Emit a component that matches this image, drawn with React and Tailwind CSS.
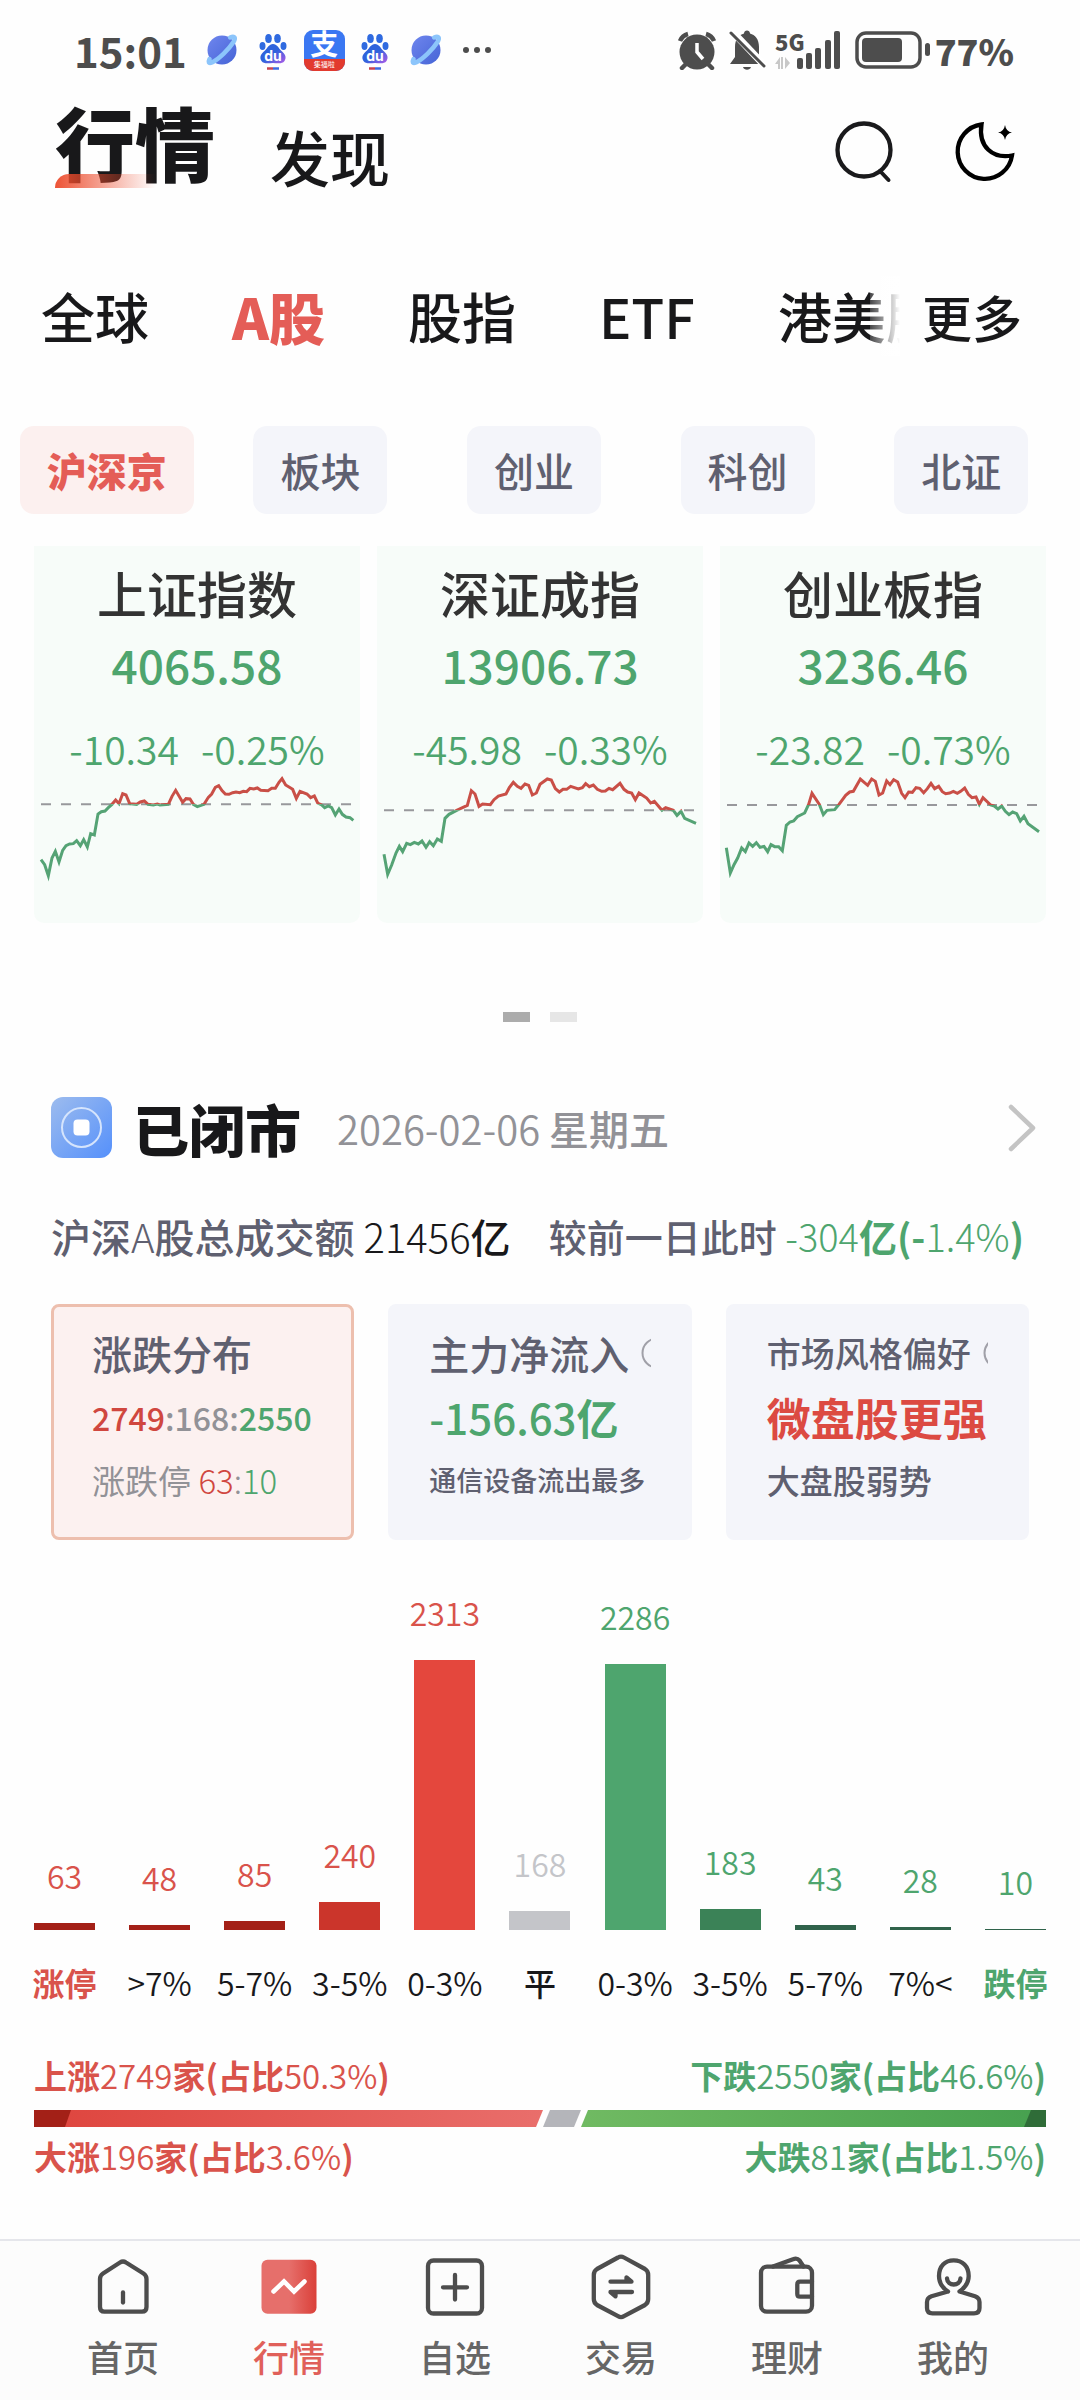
import { useState } from "react";

const indexes = [
  {
    name: "上证指数", value: "4065.58", change: "-10.34", percent: "-0.25%", left: 42, base: 824,
    points: "63,990 74,1005 85,1038 96,985 106,965 117,997 128,962 138,948 149,943 160,942 170,933 181,948 191,930 202,952 212,912 223,916 234,853 244,846 255,844 265,834 276,824 287,811 297,822 308,792 318,796 329,822 350,824 361,817 373,814 384,824 400,826 412,823 420,826 445,824 456,800 467,782 488,818 498,807 510,808 520,824 532,831 552,824 565,803 575,793 586,773 596,768 606,783 616,793 627,794 638,789 648,787 659,789 670,785 680,786 690,776 701,778 712,775 722,782 744,783 755,776 766,776 777,758 786,747 797,766 818,779 829,806 840,785 861,793 872,804 883,799 893,820 905,826 914,834 925,829 935,834 946,856 957,838 967,854 978,862 990,864 1000,872",
  },
  {
    name: "深证成指", value: "13906.73", change: "-45.98", percent: "-0.33%", left: 21, base: 842,
    points: "42,974 53,1034 65,1006 78,970 88,950 98,966 110,941 121,945 133,938 145,943 156,934 168,953 179,936 190,948 202,928 214,935 225,866 237,854 260,842 292,827 304,783 315,793 327,830 338,823 361,825 372,810 385,799 408,793 418,774 430,758 442,770 453,776 465,763 476,767 487,796 499,790 510,764 532,748 544,751 556,777 568,787 579,779 590,779 602,770 625,778 637,774 647,762 658,771 670,766 682,779 695,785 706,784 717,776 728,780 750,761 762,779 773,787 785,790 796,810 807,790 830,805 842,820 853,815 876,842 887,834 910,842 921,857 933,845 944,866 978,881",
  },
  {
    name: "创业板指", value: "3236.46", change: "-23.82", percent: "-0.73%", left: 31, base: 826,
    points: "50,954 62,1030 73,1005 84,985 96,955 107,966 118,940 129,950 140,939 151,953 163,950 174,966 184,945 195,951 207,951 218,963 230,887 241,877 252,874 263,861 285,850 297,824 307,791 329,824 341,855 352,842 375,840 388,824 408,797 420,787 431,785 452,748 474,767 486,748 497,755 508,796 519,790 531,754 541,765 552,750 564,757 576,791 586,804 597,787 608,788 619,774 630,776 642,789 653,777 664,761 675,777 687,770 698,786 708,792 720,790 731,785 743,791 753,785 765,775 776,794 787,804 799,802 809,824 820,804 843,826 854,829 865,838 876,829 887,845 898,855 909,847 921,852 932,874 943,860 955,882 988,906",
  },
];

const bars = [
  { label: "涨停", count: 63, bar: "bg-[#a32017]", text: "text-[#d9534b]", labelColor: "text-[#d9534b] font-bold" },
  { label: ">7%", count: 48, bar: "bg-[#a32017]", text: "text-[#d9534b]" },
  { label: "5-7%", count: 85, bar: "bg-[#a32017]", text: "text-[#d9534b]" },
  { label: "3-5%", count: 240, bar: "bg-[#cb352b]", text: "text-[#d9534b]" },
  { label: "0-3%", count: 2313, bar: "bg-[#e4473d]", text: "text-[#d9534b]" },
  { label: "平", count: 168, bar: "bg-[#c4c5c9]", text: "text-[#c4c5c9]", labelColor: "text-[#18181a] font-medium" },
  { label: "0-3%", count: 2286, bar: "bg-[#4ea56e]", text: "text-[#4ea56e]" },
  { label: "3-5%", count: 183, bar: "bg-[#3b8257]", text: "text-[#4ea56e]" },
  { label: "5-7%", count: 43, bar: "bg-[#30634b]", text: "text-[#4ea56e]" },
  { label: "7%<", count: 28, bar: "bg-[#30634b]", text: "text-[#4ea56e]" },
  { label: "跌停", count: 10, bar: "bg-[#30634b]", text: "text-[#4ea56e]", labelColor: "text-[#4ea56e] font-bold" },
];

const chips = ["沪深京", "板块", "创业", "科创", "北证"];

function Planet() {
  return (
    <svg viewBox="0 0 34 34" className="size-[34px]">
      <defs>
        <linearGradient id="planet" x1="0" y1="0" x2="1" y2="1">
          <stop offset="0" stopColor="#6f86ee" />
          <stop offset="1" stopColor="#4564d6" />
        </linearGradient>
      </defs>
      <circle cx="17" cy="17" r="14.500" fill="url(#planet)" />
      <path d="M25 4.500 C30 2.500 31 5 28.500 9 C24 16 14 26 7 29.500 C3.500 31 3 29 4.500 26" fill="none" stroke="#8cc5fb" strokeWidth="4.500" strokeLinecap="round" />
    </svg>
  );
}

function Paw() {
  return (
    <svg viewBox="0 0 34 42" className="h-[42px] w-[34px]">
      <defs>
        <linearGradient id="paw" x1="0" y1="0" x2="1" y2="1">
          <stop offset="0.5" stopColor="#2f63dc" />
          <stop offset="1" stopColor="#b05be8" />
        </linearGradient>
      </defs>
      <ellipse cx="12.500" cy="9.500" rx="3.300" ry="4.500" fill="#2f6ae0" />
      <ellipse cx="21.500" cy="9.500" rx="3.300" ry="4.500" fill="#2f6ae0" />
      <ellipse cx="6.500" cy="17" rx="3" ry="4" fill="#2f6ae0" />
      <ellipse cx="27.500" cy="17" rx="3" ry="4" fill="#2f6ae0" />
      <path d="M17 15 C21 15 22.500 19 25 21.500 C29 25 31 28 28.500 32 C26 35.500 21 34 17 34 C13 34 8 35.500 5.500 32 C3 28 5 25 9 21.500 C11.500 19 13 15 17 15Z" fill="url(#paw)" />
      <text x="17" y="31.500" textAnchor="middle" fontSize="14" fontWeight="700" fontFamily="Inter, sans-serif" fill="#fff">du</text>
      <path d="M11 39.500H17" stroke="#c9434f" strokeWidth="2.500" />
      <path d="M17 39.500H23" stroke="#3c6be0" strokeWidth="2.500" />
    </svg>
  );
}

function Alipay() {
  return (
    <span className="flex h-[41px] w-[41px] flex-col items-center overflow-hidden rounded-[9px] bg-[#3a77f2] text-white">
      <span className="h-[29px] text-[28px] leading-[26px] font-bold">支</span>
      <span className="h-[12px] w-full bg-[#e23a2e] text-center text-[7px] leading-[11px]">集福啦</span>
    </span>
  );
}

function StatusBar() {
  return (
    <div className="flex h-[100px] items-center justify-between pr-[66px] pl-[74px] text-[#4d4d4d]">
      <div className="flex items-center">
        <span className="text-[42px] leading-10 font-bold">15:01</span>
        <div className="ml-2.5 flex items-center [&>*]:shrink-0">
          <span className="flex w-[51px] justify-center"><Planet /></span>
          <span className="flex w-[51px] justify-center"><Paw /></span>
          <span className="flex w-[51px] justify-center"><Alipay /></span>
          <span className="flex w-[51px] justify-center"><Paw /></span>
          <span className="flex w-[51px] justify-center"><Planet /></span>
          <span className="flex w-[51px] justify-center gap-[5px]">
            <i className="size-1.5 rounded-full bg-[#4d4d4d]" />
            <i className="size-1.5 rounded-full bg-[#4d4d4d]" />
            <i className="size-1.5 rounded-full bg-[#4d4d4d]" />
          </span>
        </div>
      </div>
      <div className="flex items-center">
        <svg viewBox="0 0 40 40" className="size-10" fill="none" stroke="#4d4d4d">
          <circle cx="20" cy="22" r="17.500" fill="#4d4d4d" stroke="none" />
          <path d="M3 11 A12 12 0 0 1 11 4 M29 4 A12 12 0 0 1 37 11" strokeWidth="4.500" />
          <path d="M9 34 L5 38 M31 34 L35 38" strokeWidth="4.500" strokeLinecap="round" />
          <path d="M20 13V22L26 29" stroke="#fff" strokeWidth="3.500" />
        </svg>
        <svg viewBox="0 0 40 42" className="ml-2.5 h-[42px] w-10">
          <path d="M3 35 L8 28 V18 C8 10 12 6 17 4.500 C17 0.500 23 0.500 23 4.500 C28 6 32 10 32 18 V28 L37 35Z" fill="#4d4d4d" />
          <path d="M16 38 H24 C23 41.500 17 41.500 16 38Z" fill="#4d4d4d" />
          <path d="M3 0 L38 37" stroke="#fff" strokeWidth="7" />
          <path d="M4 4 L37 37" stroke="#4d4d4d" strokeWidth="3" strokeLinecap="round" />
        </svg>
        <div className="ml-2 flex h-[38px] items-end">
          <div className="flex flex-col justify-between self-stretch">
            <span className="text-[22px] leading-5 font-black">5G</span>
            <svg viewBox="0 0 16 12" className="h-3 w-4" fill="#c8c8c8">
              <path d="M0 7 L5 0 V12 H3 V7Z M6 0H8V12H6Z M10 0 L15 6 L10 12Z" />
            </svg>
          </div>
          <svg viewBox="0 0 44 38" className="-ml-2 h-[38px] w-11" fill="#4d4d4d">
            <rect x="0" y="27" width="6" height="11" rx="2" />
            <rect x="9" y="22" width="6" height="16" rx="2" />
            <rect x="18" y="17" width="6" height="21" rx="2" />
            <rect x="28" y="9" width="6" height="29" rx="2" />
            <rect x="37" y="0" width="6" height="38" rx="2" />
          </svg>
        </div>
        <svg viewBox="0 0 76 38" className="ml-3.5 h-[38px] w-[76px]">
          <rect x="2" y="2" width="63" height="34" rx="9" fill="none" stroke="#4d4d4d" strokeWidth="3.500" />
          <rect x="7" y="7" width="40" height="24" rx="4" fill="#4d4d4d" />
          <rect x="70" y="12" width="5" height="13" rx="2.500" fill="#4d4d4d" />
        </svg>
        <span className="ml-1 text-[36px] leading-10 font-black">77%</span>
      </div>
    </div>
  );
}

function Sparkline({ left, base, points }) {
  const id = "spark" + base;
  return (
    <svg viewBox={`${left} 730 978 330`} className="mt-1.5 w-full" fill="none">
      <clipPath id={id + "up"}><rect x="0" y="700" width="1100" height={base - 700} /></clipPath>
      <clipPath id={id + "down"}><rect x="0" y={base} width="1100" height="400" /></clipPath>
      <path d={`M${left + 21} ${base}H${left + 957}`} stroke="#98989c" strokeWidth="6" strokeDasharray="30 30" />
      <polyline points={points} stroke="#c94f47" strokeWidth="9" clipPath={`url(#${id}up)`} />
      <polyline points={points} stroke="#55a375" strokeWidth="9" clipPath={`url(#${id}down)`} />
    </svg>
  );
}

function HelpRing() {
  return (
    <svg viewBox="0 0 32 32" className="size-8 shrink-0" fill="none" stroke="#a0a0a8" strokeWidth="2">
      <circle cx="16" cy="16" r="14.500" />
    </svg>
  );
}

function NavIcon({ name }) {
  return (
    <svg viewBox="0 0 68 68" className="size-[68px]" fill="none" stroke="#4d4d4d" strokeWidth="4.300" strokeLinejoin="round" strokeLinecap="round">
      {name === "首页" && (
        <>
          <path d="M31 9.500 Q34 7.500 37 9.500 L54.500 20.500 Q57.500 22.500 57.500 26 V54 Q57.500 58.700 53 58.700 H15.500 Q11 58.700 11 54 V26 Q11 22.500 14 20.500Z" />
          <path d="M34 39.500V49.500" />
        </>
      )}
      {name === "行情" && (
        <>
          <defs>
            <linearGradient id="navRed">
              <stop offset="0.5" stopColor="#e66f6b" />
              <stop offset="1" stopColor="#da4039" />
            </linearGradient>
          </defs>
          <rect x="6.500" y="6.700" width="55" height="54" rx="6" fill="url(#navRed)" stroke="none" />
          <path d="M18.500 38.500 L29 28.500 L39 38.500 L49.500 28.500" stroke="#fff" strokeWidth="4.500" strokeLinejoin="miter" />
        </>
      )}
      {name === "自选" && (
        <>
          <rect x="7" y="7.500" width="54" height="53" rx="5.500" />
          <path d="M34 22V46.500 M22 34.300H46" />
        </>
      )}
      {name === "交易" && (
        <>
          <path d="M31 4.500 Q34 2.800 37 4.500 L58 16 Q61.200 18 61.200 22 V46 Q61.200 50 58 52 L37 63.200 Q34 65 31 63.200 L10 52 Q6.800 50 6.800 46 V22 Q6.800 18 10 16Z" />
          <path d="M23.500 28.700H44.500L39.500 24.500V28 M45 39H23.500L28.500 43.300V40" />
        </>
      )}
      {name === "理财" && (
        <>
          <rect x="8" y="13.700" width="51" height="45" rx="6" />
          <path d="M59 28.700H47Q44.300 28.700 44.300 31.500V41Q44.300 43.700 47 43.700H59" />
          <path d="M20 13.500 L40 6.200 Q44 4.500 46.500 7.500 L50.500 13.500" />
        </>
      )}
      {name === "我的" && (
        <>
          <path d="M29 38.500 C22 34 20 29 20 23 C20 13 26 7.300 34.700 7.300 S49.700 13 49.700 23 C49.700 29 47 34 40.500 38.500 L56 43.300 Q60.500 45 60.500 49 V55 Q60.500 60.300 55 60.300 H13.500 Q8 60.300 8 55 V49 Q8 45 12.500 43.300 L29 38.500" />
          <path d="M28 25.500 C28.500 33.500 41 33.500 41.500 25.500" />
        </>
      )}
    </svg>
  );
}

export default function App() {
  const [chip, setChip] = useState("沪深京");
  const max = Math.max(...bars.map((b) => b.count));

  return (
    <div className="flex min-h-screen flex-col bg-[#fefefe] font-['Noto_Sans_CJK_SC',sans-serif] text-[#18181a]">
      <StatusBar />

      <header className="flex h-[86px] items-end justify-between pr-[62px] pl-[55px]">
        <div className="flex items-end gap-[55px]">
          <h1 className="relative mb-1.5 text-[80px] leading-[80px] font-black">
            行情
            <span className="absolute -bottom-2 left-0 h-3.5 w-[101px] rounded-tl-[14px] bg-linear-to-r from-[#ec4a2b] to-[#ec4a2b]/0 opacity-95" />
          </h1>
          <a href="#discover" className="text-[60px] leading-[60px] font-medium">发现</a>
        </div>
        <div className="mb-0.5 flex gap-14">
          <button aria-label="搜索">
            <svg viewBox="0 0 64 64" className="size-16" fill="none" stroke="#1a1a1c" strokeWidth="4.300" strokeLinecap="round">
              <circle cx="30" cy="30" r="26.500" />
              <path d="M46 51 L54.500 60" strokeWidth="4" />
            </svg>
          </button>
          <button aria-label="夜间模式">
            <svg viewBox="0 0 64 64" className="size-16" fill="none" stroke="#000" strokeWidth="4.300">
              <path d="M27.500 4.500 A27.300 27.300 0 1 0 58 35.500 C39 39 24 27 27.500 4.500Z" />
              <path d="M51 5 Q52 11.500 58 12.500 Q52 13.500 51 20 Q50 13.500 44 12.500 Q50 11.500 51 5Z" fill="#000" stroke="none" />
            </svg>
          </button>
        </div>
      </header>

      <nav className="mt-[90px] flex items-center pl-[41px] text-[54px] leading-[80px] font-medium">
        <div className="relative flex min-w-0 flex-1 gap-[83px] overflow-x-clip whitespace-nowrap">
          <a href="#global">全球</a>
          <a href="#a" className="text-[56px] font-black text-[#e45d57]">A股</a>
          <a href="#futures">股指</a>
          <a href="#etf">ETF</a>
          <a href="#hkus">港美股</a>
          <span className="absolute inset-y-0 right-0 w-[30px] bg-linear-to-r from-white/20 to-white" />
        </div>
        <a href="#more" className="w-[180px] shrink-0 pl-[22px] text-[50px]">更多</a>
      </nav>

      <div className="mt-[70px] grid grid-cols-5 justify-items-center pr-3 text-[40px] leading-10">
        {chips.map((c) => (
          <button
            key={c}
            onClick={() => setChip(c)}
            className={
              c === chip
                ? "h-[88px] rounded-[14px] bg-[#fcf0ef] px-[27px] font-black text-[#e45d57]"
                : "h-[88px] rounded-[14px] bg-[#f4f5fa] px-[27px] font-medium text-[#5f6070]"
            }
          >
            {c}
          </button>
        ))}
      </div>

      <div className="mt-8 grid grid-cols-3 gap-[17px] px-[34px] text-center">
        {indexes.map((item) => (
          <section key={item.name} className="rounded-b-[10px] bg-[#f7fcf9] pt-[21px] pb-10">
            <h2 className="text-[50px] leading-[50px] font-medium text-[#333]">{item.name}</h2>
            <p className="mt-6 text-[46px] leading-[46px] font-medium text-[#4ea56e]">{item.value}</p>
            <p className="mt-[42px] flex justify-center gap-[22px] text-[39px] leading-[38px] font-[350] text-[#4ea56e]">
              <span>{item.change}</span>
              <span>{item.percent}</span>
            </p>
            <Sparkline left={item.left} base={item.base} points={item.points} />
          </section>
        ))}
      </div>

      <div className="mt-[89px] flex justify-center gap-5">
        <span className="h-2.5 w-[27px] bg-[#acacac]" />
        <span className="h-2.5 w-[27px] bg-[#e6e6e6]" />
      </div>

      <div className="mt-[75px] flex items-center px-[51px]">
        <svg viewBox="0 0 61 61" className="size-[61px]">
          <defs>
            <linearGradient id="market" x1="0" y1="0" x2="1" y2="1">
              <stop offset="0" stopColor="#9dbcee" />
              <stop offset="1" stopColor="#5590fb" />
            </linearGradient>
          </defs>
          <rect width="61" height="61" rx="12" fill="url(#market)" />
          <circle cx="30.500" cy="30.500" r="19.500" fill="none" stroke="#d5e4fc" strokeWidth="2" />
          <rect x="22.500" y="22.500" width="16" height="16" rx="4" fill="#fff" />
        </svg>
        <h2 className="ml-[21px] text-[56px] leading-[60px] font-black">已闭市</h2>
        <span className="ml-9 text-[40px] leading-10 font-medium text-[#929297]">
          <span className="font-[350]">2026-02-06</span> 星期五
        </span>
        <a href="#market" aria-label="市场详情" className="-mr-2 ml-auto">
          <svg viewBox="0 0 30 50" className="h-[50px] w-[30px]" fill="none" stroke="#c4c4c4" strokeWidth="4.500" strokeLinecap="round" strokeLinejoin="round">
            <path d="M4 4 L26 25 L4 46" />
          </svg>
        </a>
      </div>

      <div className="mt-[58px] flex items-center justify-between pr-[56px] pl-[51px] leading-10 font-medium whitespace-nowrap">
        <p className="text-[40px]">
          <span className="text-[#5f6070]">沪深<span className="font-light">A</span>股总成交额</span> <span className="font-light">21456</span>亿
        </p>
        <p className="text-[38px] text-[#4ea56e]">
          <span className="text-[#5f6070]">较前一日此时</span> <span className="font-light">-304</span><b>亿(-</b><span className="font-light">1.4%</span><b>)</b>
        </p>
      </div>

      <div className="mt-12 grid grid-cols-3 gap-[34px] px-[51px] font-medium whitespace-nowrap text-[#5f6070]">
        <section className="rounded-lg border-3 border-[#edbfae] bg-[#fcf1f0] px-[38px] pt-[26px] pb-[41px]">
          <h3 className="text-[40px] leading-10">涨跌分布</h3>
          <p className="mt-[22px] text-[32px] leading-11 text-[#929297]">
            <span className="text-[#d0473f]">2749</span>:168:<span className="text-[#4ea56e]">2550</span>
          </p>
          <p className="mt-[25px] text-[33px] leading-8 font-normal text-[#929297]">
            涨跌停 <span className="font-light"><span className="text-[#d0473f]">63</span>:<span className="text-[#4ea56e]">10</span></span>
          </p>
        </section>
        <section className="rounded-lg border-3 border-[#f4f5fa] bg-[#f4f5fa] px-[38px] pt-[26px] pb-[41px]">
          <h3 className="flex items-center gap-3 overflow-x-clip text-[40px] leading-10">主力净流入<HelpRing /></h3>
          <p className="mt-[22px] text-[42px] leading-11 text-[#4ea56e]">-156.63<b>亿</b></p>
          <p className="mt-[25px] text-[27px] leading-8">通信设备流出最多</p>
        </section>
        <section className="rounded-lg border-3 border-[#f4f5fa] bg-[#f4f5fa] px-[38px] pt-[26px] pb-[41px]">
          <h3 className="flex items-center gap-3 overflow-x-clip text-[34px] leading-10">市场风格偏好<HelpRing /></h3>
          <p className="mt-[22px] text-[44px] leading-11 font-bold text-[#dc4a42]">微盘股更强</p>
          <p className="mt-[25px] text-[33px] leading-8">大盘股弱势</p>
        </section>
      </div>

      <div className="mt-14 flex justify-between px-[34px] text-[32px] leading-8 whitespace-nowrap">
        {bars.map((b, i) => (
          <div key={i} className="flex w-[61px] flex-col items-center">
            <div className="flex h-[334px] w-full flex-col items-center justify-end">
              <span className={`font-[350] ${b.text}`}>{b.count}</span>
              <span
                className={`mt-8 w-full shrink-0 ${b.bar}`}
                style={{ height: Math.floor((b.count / max) * 270) }}
              />
            </div>
            <span className={`mt-9 ${b.labelColor || "font-[350]"}`}>{b.label}</span>
          </div>
        ))}
      </div>

      <div className="mt-[61px] px-[34px] text-[33px] leading-8">
        <div className="flex justify-between">
          <p className="text-[#d9534b]"><b>上涨</b><span className="font-[350]">2749</span><b>家(占比</b><span className="font-[350]">50.3%</span><b>)</b></p>
          <p className="text-[#4ea56e]"><b>下跌</b><span className="font-[350]">2550</span><b>家(占比</b><span className="font-[350]">46.6%</span><b>)</b></p>
        </div>
        <svg viewBox="0 0 1012 17" className="mt-[19px] mb-[13px] w-full">
          <defs>
            <linearGradient id="rise">
              <stop offset="0" stopColor="#de443d" />
              <stop offset="1" stopColor="#e96e6b" />
            </linearGradient>
            <linearGradient id="fall">
              <stop offset="0" stopColor="#70ba62" />
              <stop offset="1" stopColor="#46a04f" />
            </linearGradient>
          </defs>
          <path d="M0 0H509L502 17H0Z" fill="url(#rise)" />
          <path d="M0 0H37L31 17H0Z" fill="#a32017" />
          <path d="M516 0H547L540 17H509Z" fill="#b4b5ba" />
          <path d="M554 0H1012V17H547Z" fill="url(#fall)" />
          <path d="M997 0H1012V17H990Z" fill="#2f6c38" />
        </svg>
        <div className="flex justify-between">
          <p className="text-[#d9534b]"><b>大涨</b><span className="font-[350]">196</span><b>家(占比</b><span className="font-[350]">3.6%</span><b>)</b></p>
          <p className="text-[#4ea56e]"><b>大跌</b><span className="font-[350]">81</span><b>家(占比</b><span className="font-[350]">1.5%</span><b>)</b></p>
        </div>
      </div>

      <nav className="mt-auto grid grid-cols-6 border-t-2 border-[#e5e6eb] bg-[#fcfcfc] pt-3 pr-11 pb-[26px] pl-10 text-[36px] leading-9 font-medium text-[#666]">
        {["首页", "行情", "自选", "交易", "理财", "我的"].map((name) => (
          <a key={name} href={"#" + name} className="flex flex-col items-center gap-[17px]">
            <NavIcon name={name} />
            <span className={name === "行情" ? "text-[#e0605a]" : ""}>{name}</span>
          </a>
        ))}
      </nav>
    </div>
  );
}
